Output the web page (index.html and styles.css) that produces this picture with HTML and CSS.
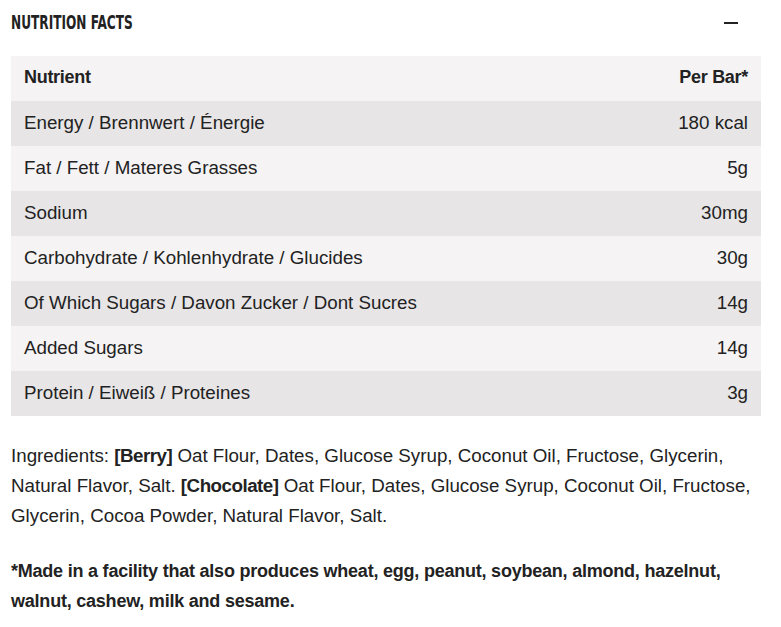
FILE: index.html
```html
<!DOCTYPE html>
<html>
<head>
<meta charset="utf-8">
<link rel="stylesheet" href="styles.css">
</head>
<body>
<div class="panel">
  <div class="head">
    <h2 class="title">NUTRITION FACTS</h2>
    <span class="toggle"></span>
  </div>
  <table class="facts">
    <thead>
      <tr><th class="l">Nutrient</th><th class="r">Per Bar*</th></tr>
    </thead>
    <tbody>
      <tr><td class="l">Energy / Brennwert / Énergie</td><td class="r">180 kcal</td></tr>
      <tr><td class="l">Fat / Fett / Materes Grasses</td><td class="r">5g</td></tr>
      <tr><td class="l">Sodium</td><td class="r">30mg</td></tr>
      <tr><td class="l">Carbohydrate / Kohlenhydrate / Glucides</td><td class="r">30g</td></tr>
      <tr><td class="l">Of Which Sugars / Davon Zucker / Dont Sucres</td><td class="r">14g</td></tr>
      <tr><td class="l">Added Sugars</td><td class="r">14g</td></tr>
      <tr><td class="l">Protein / Eiweiß / Proteines</td><td class="r">3g</td></tr>
    </tbody>
  </table>
  <p class="ingr">Ingredients: <b>[Berry]</b> Oat Flour, Dates, Glucose Syrup, Coconut Oil, Fructose, Glycerin, Natural Flavor, Salt. <b>[Chocolate]</b> Oat Flour, Dates, Glucose Syrup, Coconut Oil, Fructose, Glycerin, Cocoa Powder, Natural Flavor, Salt.</p>
  <p class="note">*Made in a facility that also produces wheat, egg, peanut, soybean, almond, hazelnut, walnut, cashew, milk and sesame.</p>
</div>
</body>
</html>
```
FILE: styles.css
```css
html, body { margin: 0; padding: 0; background: #fff; }
body {
  font-family: "Liberation Sans", Arial, sans-serif;
  color: #222;
  font-size: 18.75px;
}
.panel { padding: 0 20px 0 11px; }
.head {
  display: flex;
  align-items: center;
  justify-content: space-between;
  height: 44px;
  padding-right: 3px;
}
.title {
  margin: 0;
  font-family: "DejaVu Sans", sans-serif;
  font-stretch: condensed;
  font-weight: bold;
  font-size: 19px;
  color: #222;
  transform: scaleX(0.71);
  transform-origin: left center;
  white-space: nowrap;
}
.toggle {
  display: block;
  width: 14px;
  height: 1.5px;
  background: #222;
  margin-right: 20px;
  margin-top: 2px;
}
.facts {
  width: 750px;
  border-collapse: collapse;
  margin-top: 12px;
}
.facts th, .facts td {
  height: 45px;
  box-sizing: border-box;
  padding: 0 13px 2px;
  font-size: 18.75px;
  color: #222;
}
.facts th {
  font-weight: bold;
  font-size: 18px;
  letter-spacing: -0.3px;
  background: #f5f3f4;
}
.l { text-align: left; }
.r { text-align: right; }
.facts tbody tr:nth-child(odd) td { background: #e7e5e6; }
.facts tbody tr:nth-child(even) td { background: #f5f3f4; }
.ingr {
  margin: 25px 0 0;
  line-height: 30px;
}
.ingr b {
  font-weight: bold;
  letter-spacing: -0.5px;
}
.note {
  margin: 25px 0 0;
  line-height: 30px;
  font-weight: bold;
  font-size: 18px;
  letter-spacing: -0.22px;
}
```
